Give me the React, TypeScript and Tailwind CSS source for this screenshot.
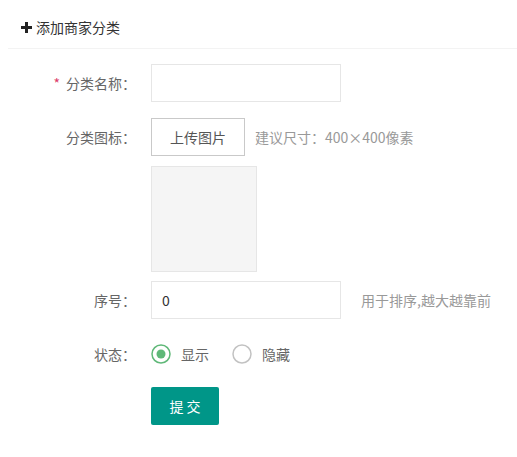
import React, { useState } from "react";

const font = { fontFamily: '"Noto Sans CJK SC", "Noto Sans", sans-serif' };

const Radio: React.FC<{ checked: boolean; label: string; onClick: () => void }> = ({
  checked,
  label,
  onClick,
}) => (
  <button type="button" onClick={onClick} className="flex items-center mr-[10px]">
    <svg width="20" height="20" viewBox="0 0 20 20" className="shrink-0">
      <circle
        cx="10"
        cy="10"
        r="9"
        fill="none"
        stroke={checked ? "#5FB878" : "#c2c2c2"}
        strokeWidth="1.5"
      />
      {checked && <circle cx="10" cy="10" r="4.5" fill="#5FB878" />}
    </svg>
    <span className="ml-[10px] text-sm text-[#666] leading-[20px]">{label}</span>
  </button>
);

export default function App() {
  const [status, setStatus] = useState(1);
  const [sort, setSort] = useState("0");

  return (
    <div className="w-full min-h-[457px] bg-white" style={font}>
      {/* header */}
      <div className="ml-[8px] h-[49px] pt-[17px] pl-[13px] border-b border-[#f3f3f3] flex items-start">
        <div className="flex items-center leading-[20px] text-sm text-[#333]">
          <svg width="11" height="11" viewBox="0 0 11 11" className="mr-[4px]">
            <rect x="4" y="0" width="3" height="11" fill="#222" />
            <rect x="0" y="4" width="11" height="3" fill="#222" />
          </svg>
          添加商家分类
        </div>
      </div>

      <form className="pl-[41px] pt-[15px]" onSubmit={(e) => e.preventDefault()}>
        {/* name */}
        <div className="flex">
          <label className="w-[110px] pr-[15px] py-[9px] text-right text-sm leading-[20px] text-[#666]">
            <span className="text-[#dc3c6a] mr-[6px]">*</span>分类名称：
          </label>
          <input
            type="text"
            className="w-[190px] h-[38px] border border-[#e6e6e6] px-[10px] text-sm text-[#333] outline-none"
          />
        </div>

        {/* icon */}
        <div className="flex mt-[16px]">
          <label className="w-[110px] pr-[15px] py-[9px] text-right text-sm leading-[20px] text-[#666]">
            分类图标：
          </label>
          <div className="flex flex-col">
            <div className="flex items-center">
              <button
                type="button"
                className="w-[94px] h-[38px] border border-[#c9c9c9] bg-white text-sm text-[#555]"
              >
                上传图片
              </button>
              <span className="ml-[10px] text-sm text-[#999]">建议尺寸：400×400像素</span>
            </div>
            <div className="mt-[10px] w-[106px] h-[106px] bg-[#f5f5f5] border border-[#e6e6e6]" />
          </div>
        </div>

        {/* sort */}
        <div className="flex items-center mt-[9px]">
          <label className="w-[110px] pr-[15px] py-[9px] text-right text-sm leading-[20px] text-[#666]">
            序号：
          </label>
          <input
            type="text"
            value={sort}
            onChange={(e) => setSort(e.target.value)}
            className="w-[190px] h-[38px] border border-[#e6e6e6] px-[10px] text-sm text-[#333] outline-none"
          />
          <span className="ml-[20px] text-sm text-[#999]">用于排序,越大越靠前</span>
        </div>

        {/* status */}
        <div className="flex items-center mt-[16px] h-[38px]">
          <label className="w-[110px] pr-[15px] text-right text-sm leading-[20px] text-[#666]">
            状态：
          </label>
          <div className="flex items-center">
            <Radio checked={status === 1} label="显示" onClick={() => setStatus(1)} />
            <div className="w-[13px]" />
            <Radio checked={status === 0} label="隐藏" onClick={() => setStatus(0)} />
          </div>
        </div>

        {/* submit */}
        <div className="flex mt-[14px]">
          <div className="w-[110px]" />
          <button
            type="submit"
            className="w-[68px] h-[38px] bg-[#009688] text-white text-sm rounded-[2px]"
          >
            提 交
          </button>
        </div>
      </form>
    </div>
  );
}
